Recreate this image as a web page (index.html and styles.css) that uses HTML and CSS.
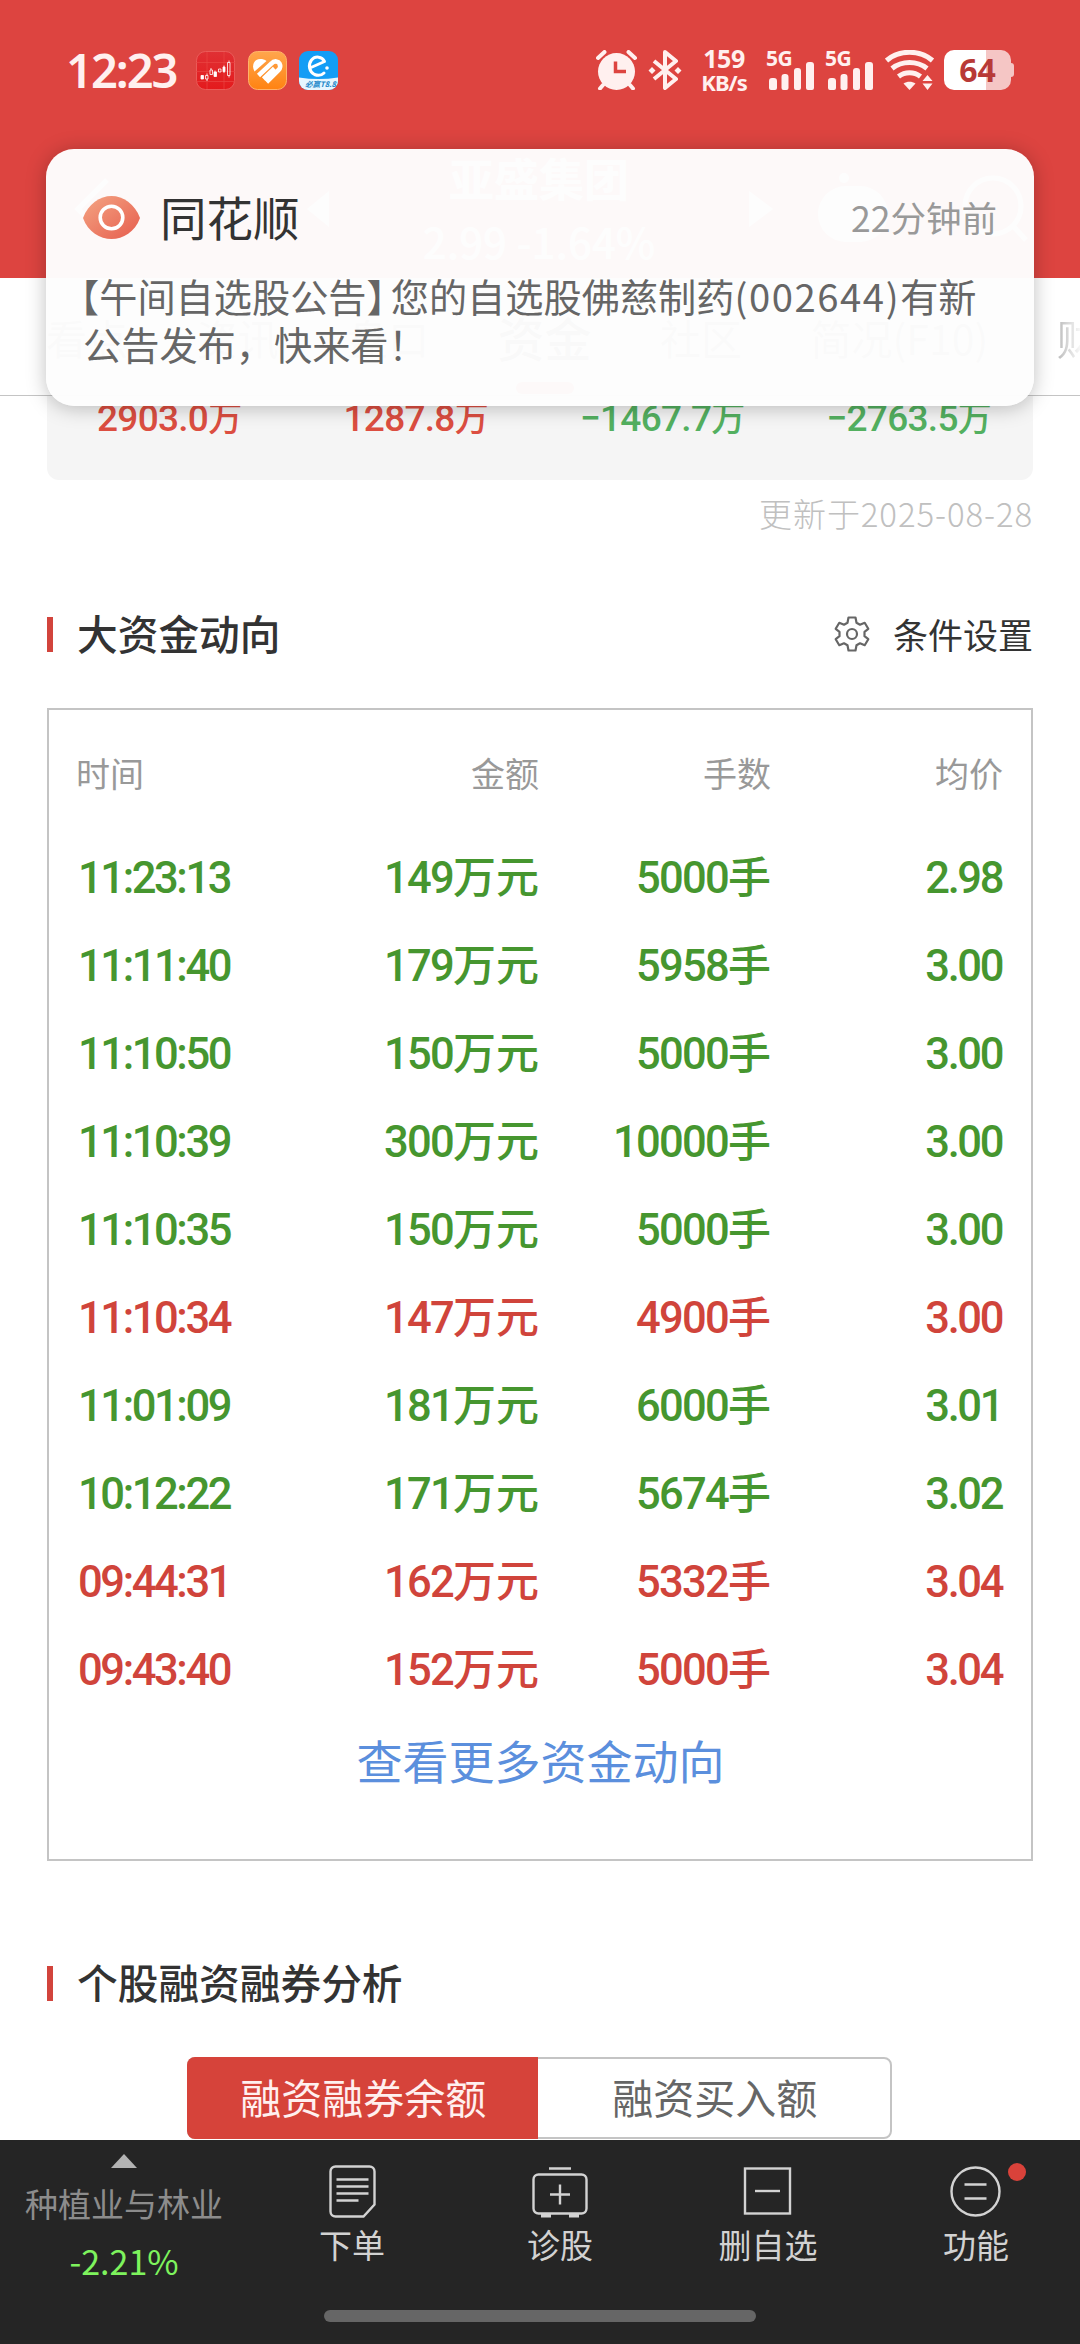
FILE: index.html
```html
<!DOCTYPE html>
<html lang="zh-CN">
<head>
    <meta charset="UTF-8">
    <meta name="viewport" content="width=device-width, initial-scale=1.0">
    <title>亚盛集团 - 资金</title>
    <link rel="stylesheet" href="styles.css">
</head>
<body>

<div class="page">

    <header class="header">
        <!-- 状态栏 -->
        <div class="status-bar">
            <div class="status-left">
                <span class="clock">12:23</span>
                <svg class="app-icon" viewBox="0 0 39 39">
                    <defs>
                        <linearGradient id="gRed" x1="0" y1="0" x2="0" y2="1"><stop offset="0" stop-color="#e03034"/><stop offset="1" stop-color="#e41a1c"/></linearGradient>
                    </defs>
                    <rect x=".5" y=".5" width="38" height="38" rx="9" fill="url(#gRed)" stroke="#ea5a58"/>
                    <path d="M0 20.500H39M11 1V38M28 1V38M0 11.500H39M0 30.500H39" stroke="#ea4644" stroke-width=".7"/>
                    <g fill="#fff" stroke="#fff" stroke-width=".8">
                        <path d="M5 24.500h2.500v3.500H5zM18 21h2.500v4.500H18zM27 16h2v4.500h-2z"/>
                        <path fill="none" d="M9.500 24.500h2.500v3.500H9.500zM14 19h2.500v4.500H14zM22.500 18h2.500v3H22.500zM31.500 11.500h2.500v13H31.500zM6 24v1M11 22.500v2M11 28v2M15 17v2M19 19.500v2M28 14.500v2M28 20v2M33 9.500v2M33 24.500v2"/>
                    </g>
                </svg>
                <svg class="app-icon" viewBox="0 0 39 39">
                    <defs>
                        <linearGradient id="gOrange" x1="0" y1="0" x2="0" y2="1"><stop offset="0" stop-color="#ffa64d"/><stop offset="1" stop-color="#ff8312"/></linearGradient>
                    </defs>
                    <rect x=".5" y=".5" width="38" height="38" rx="9" fill="url(#gOrange)" stroke="#ffb36a"/>
                    <path d="M6.500 20.500C3 14 6.500 8 12 8c3 0 4.500 .5 6.500 2z" fill="#fff"/>
                    <path d="M10.500 24.500 23.500 12.500c3-3.500 7-2 8 0s1 4.500-1 6.500L18.500 31M15.500 28 26.500 17.500" fill="none" stroke="#fff" stroke-width="4.600"/>
                </svg>
                <svg class="app-icon" viewBox="0 0 39 39">
                    <defs>
                        <clipPath id="cBlue"><rect width="39" height="39" rx="9"/></clipPath>
                    </defs>
                    <g clip-path="url(#cBlue)">
                        <rect width="39" height="39" fill="#139df5"/>
                        <path d="M0 26.500q19.500 3 39 0V39H0z" fill="#e6f6ff"/>
                    </g>
                    <path d="M12 16.500 25.500 10.500C23 5.500 16.500 4.500 12.500 9c-4 5-2 12 3 14.500 4 1.500 7 1 9.500-1.500" fill="none" stroke="#fff" stroke-width="3" stroke-linecap="round" stroke-linejoin="round"/>
                    <circle cx="28" cy="17" r="1.800" fill="#fff"/>
                    <text x="6" y="36" class="app-icon-text">必赢T8.8</text>
                </svg>
            </div>
            <div class="status-right">
                <svg class="icon-alarm" width="42" height="40" viewBox="0 0 42 40">
                    <circle cx="20.500" cy="21.500" r="18.500" fill="#fff0ef"/>
                    <path d="M2 8 8.500 2M39 8l-6.500-6M7 35l-3 3.500M34 35l3 3.500" stroke="#fff0ef" stroke-width="4" stroke-linecap="round"/>
                    <path d="M19.500 11.500V21.500H30" fill="none" stroke="#dd4440" stroke-width="3.500"/>
                </svg>
                <svg class="icon-bt" width="34" height="40" viewBox="0 0 34 40">
                    <path d="M6 11 28 29 17 38V2L28 11 6 29" fill="none" stroke="#fff0ef" stroke-width="4" stroke-linejoin="round"/>
                    <path d="M4 17l3.500 3.500L4 24 .5 20.500zM30 17l3.500 3.500L30 24l-3.500-3.500z" fill="#fff0ef"/>
                </svg>
                <div class="net-speed"><span>159</span><span>KB/s</span></div>
                <div class="signal">
                    <span>5G</span>
                    <svg width="46" height="28" viewBox="0 0 46 28"><path fill="#fff0ef" d="M0 19a3 3 0 0 1 3-3h2a3 3 0 0 1 3 3v7a2 2 0 0 1-2 2H2a2 2 0 0 1-2-2zM12.500 15a3 3 0 0 1 3-3h1a3 3 0 0 1 3 3v11a2 2 0 0 1-2 2h-3a2 2 0 0 1-2-2zM25 9a3 3 0 0 1 3-3h1a3 3 0 0 1 3 3v17a2 2 0 0 1-2 2h-3a2 2 0 0 1-2-2zM37 3a3 3 0 0 1 3-3h2a3 3 0 0 1 3 3v23a2 2 0 0 1-2 2h-4a2 2 0 0 1-2-2z"/></svg>
                </div>
                <div class="signal">
                    <span>5G</span>
                    <svg width="46" height="28" viewBox="0 0 46 28"><path fill="#fff0ef" d="M0 19a3 3 0 0 1 3-3h2a3 3 0 0 1 3 3v7a2 2 0 0 1-2 2H2a2 2 0 0 1-2-2zM12.500 15a3 3 0 0 1 3-3h1a3 3 0 0 1 3 3v11a2 2 0 0 1-2 2h-3a2 2 0 0 1-2-2zM25 9a3 3 0 0 1 3-3h1a3 3 0 0 1 3 3v17a2 2 0 0 1-2 2h-3a2 2 0 0 1-2-2zM37 3a3 3 0 0 1 3-3h2a3 3 0 0 1 3 3v23a2 2 0 0 1-2 2h-4a2 2 0 0 1-2-2z"/></svg>
                </div>
                <svg class="icon-wifi" width="50" height="40" viewBox="0 0 50 40">
                    <g fill="none" stroke="#fff0ef" stroke-width="5">
                        <path d="M1.500 10.500C14-.5 35-.5 47.500 10.500"/>
                        <path d="M7 18.500c10-8 25-8 35 0"/>
                        <path d="M13.500 26.500c6.500-5 15.500-5 22 0"/>
                    </g>
                    <path d="M18.500 33.500c3.500-2.500 8.500-2.500 12 0l-6 6.500z" fill="#fff0ef"/>
                    <path d="M42.500 25l5 6h-10zM42.500 40l-5-6.500h10z" fill="#fff0ef"/>
                </svg>
                <div class="battery"><span class="battery-body"><b>64</b></span><span class="battery-tip"></span></div>
            </div>
        </div>

        <!-- 股票标题 -->
        <div class="stock-bar">
            <svg width="36" height="66" viewBox="0 0 36 66"><path d="M33 4 4 33l29 29" fill="none" stroke="#fff" stroke-width="5"/></svg>
            <svg class="prev" width="22" height="36" viewBox="0 0 22 36"><path d="M22 0v36L0 18z" fill="#fff"/></svg>
            <div class="stock-title">
                <div class="stock-name">亚盛集团</div>
                <div class="stock-price">2.99 -1.64%</div>
            </div>
            <svg class="next" width="24" height="36" viewBox="0 0 24 36"><path d="M0 0v36l24-18z" fill="#fff"/></svg>
            <svg class="robot" width="76" height="72" viewBox="0 0 76 72">
                <rect x="3" y="13" width="70" height="56" rx="28" fill="#fff"/>
                <rect x="11" y="21" width="54" height="36" rx="17" fill="#eee"/>
                <rect x="26" y="31" width="6" height="16" rx="3" fill="#fff"/>
                <rect x="45" y="31" width="6" height="16" rx="3" fill="#fff"/>
                <circle cx="29" cy="5" r="5" fill="#fff"/>
            </svg>
            <svg width="66" height="68" viewBox="0 0 66 68"><circle cx="31" cy="31" r="28" fill="none" stroke="#fff" stroke-width="5"/><path d="M51 51l13 14" stroke="#fff" stroke-width="5"/></svg>
        </div>
    </header>

    <nav class="tabs">
        <span>看点</span>
        <span>资讯</span>
        <span>盘口</span>
        <span class="active">资金</span>
        <span>社区</span>
        <span>简况(F10)</span>
        <span class="faded">财务</span>
    </nav>

    <main class="content">
        <div class="flow-card">
            <span class="up">2903.0<i>万</i></span>
            <span class="up">1287.8<i>万</i></span>
            <span class="down">−1467.7<i>万</i></span>
            <span class="down">−2763.5<i>万</i></span>
        </div>
        <div class="update-time">更新于2025-08-28</div>

        <!-- 大资金动向 -->
        <div class="section-head">
            <h2>大资金动向</h2>
            <div class="setting">
                <svg width="36" height="36" viewBox="0 0 36 36" fill="none" stroke="#666" stroke-width="2.200" stroke-linejoin="round">
                    <path d="M14.500 1.500h7l1 5.200 3.500 2 4.700-1.900 3.600 6-3.800 3v4.400l3.800 3-3.600 6-4.700-1.900-3.500 2-1 5.200h-7l-1-5.200-3.500-2-4.700 1.900-3.600-6 3.800-3v-4.400l-3.800-3 3.600-6 4.700 1.900 3.500-2z"/>
                    <circle cx="18" cy="18" r="5"/>
                </svg>
                <span>条件设置</span>
            </div>
        </div>

        <div class="trade-box">
            <div class="row row-head"><span>时间</span><span>金额</span><span>手数</span><span>均价</span></div>
            <div class="row green"><span>11:23:13</span><span>149<i>万元</i></span><span>5000<i>手</i></span><span>2.98</span></div>
            <div class="row green"><span>11:11:40</span><span>179<i>万元</i></span><span>5958<i>手</i></span><span>3.00</span></div>
            <div class="row green"><span>11:10:50</span><span>150<i>万元</i></span><span>5000<i>手</i></span><span>3.00</span></div>
            <div class="row green"><span>11:10:39</span><span>300<i>万元</i></span><span>10000<i>手</i></span><span>3.00</span></div>
            <div class="row green"><span>11:10:35</span><span>150<i>万元</i></span><span>5000<i>手</i></span><span>3.00</span></div>
            <div class="row red"><span>11:10:34</span><span>147<i>万元</i></span><span>4900<i>手</i></span><span>3.00</span></div>
            <div class="row green"><span>11:01:09</span><span>181<i>万元</i></span><span>6000<i>手</i></span><span>3.01</span></div>
            <div class="row green"><span>10:12:22</span><span>171<i>万元</i></span><span>5674<i>手</i></span><span>3.02</span></div>
            <div class="row red"><span>09:44:31</span><span>162<i>万元</i></span><span>5332<i>手</i></span><span>3.04</span></div>
            <div class="row red"><span>09:43:40</span><span>152<i>万元</i></span><span>5000<i>手</i></span><span>3.04</span></div>
            <a class="more">查看更多资金动向</a>
        </div>

        <!-- 融资融券 -->
        <div class="section-head margin-head">
            <h2>个股融资融券分析</h2>
        </div>
        <div class="switch">
            <span class="on">融资融券余额</span>
            <span>融资买入额</span>
        </div>
    </main>

    <!-- 底部导航 -->
    <footer class="bottom">
        <div class="bottom-bar">
            <div class="industry">
                <svg width="26" height="14" viewBox="0 0 26 14"><path d="M13 0l13 14H0z" fill="#b3b3b3"/></svg>
                <span class="industry-name">种植业与林业</span>
                <span class="industry-change">-2.21%</span>
            </div>
            <div class="nav-item">
                <svg width="56" height="54" viewBox="0 0 56 54" fill="none" stroke="#d2d2d2" stroke-width="2.400">
                    <path d="M11.500 2.500h34a5 5 0 0 1 5 5v33l-11 12h-28a5 5 0 0 1-5-5v-40a5 5 0 0 1 5-5z"/>
                    <path d="M12.500 15.500h32M12.500 22.500h32M12.500 29.500h32M12.500 36.500h22"/>
                </svg>
                <span>下单</span>
            </div>
            <div class="nav-item">
                <svg width="56" height="54" viewBox="0 0 56 54" fill="none" stroke="#d2d2d2" stroke-width="2.400">
                    <rect x="1.500" y="10.500" width="53" height="39" rx="5"/>
                    <path d="M17 4.500h22M28 20.500v20M18 30.500h20"/>
                    <path d="M9 51.500h10M37 51.500h10" stroke-width="4"/>
                </svg>
                <span>诊股</span>
            </div>
            <div class="nav-item">
                <svg width="56" height="54" viewBox="0 0 56 54" fill="none" stroke="#d2d2d2" stroke-width="2.400">
                    <rect x="5" y="4.500" width="45" height="45"/>
                    <path d="M15 27h25"/>
                </svg>
                <span>删自选</span>
            </div>
            <div class="nav-item">
                <svg width="56" height="54" viewBox="0 0 56 54" fill="none" stroke="#d2d2d2" stroke-width="2.400">
                    <circle cx="27.500" cy="27.500" r="24"/>
                    <path d="M16.500 20.500h22M16.500 34.500h22"/>
                </svg>
                <i class="dot"></i>
                <span>功能</span>
            </div>
        </div>
        <div class="home-indicator"></div>
    </footer>

    <!-- 通知弹窗 -->
    <div class="notice">
        <div class="notice-head">
            <svg width="57" height="44" viewBox="0 0 57 44">
                <defs>
                    <linearGradient id="gEye" x1="0" y1="0" x2="1" y2="1"><stop offset="0" stop-color="#f4a583"/><stop offset="1" stop-color="#e65d4e"/></linearGradient>
                </defs>
                <path d="M0 22C5 8 17 0 28.500 0S52 8 57 22C52 36 40 43 28.500 43S5 36 0 22z" fill="url(#gEye)"/>
                <circle cx="28.500" cy="21.500" r="11.300" fill="none" stroke="#fff" stroke-width="3.600"/>
            </svg>
            <span class="notice-app">同花顺</span>
            <span class="notice-time">22分钟前</span>
        </div>
        <div class="notice-text"><span class="hang-l">【</span>午间自选股公告<span class="hang-r">】</span>您的自选股佛慈制药<span class="code">(002644)</span>有新<br>公告发布，快来看！</div>
    </div>

</div>

</body>
</html>
```
FILE: styles.css
```css
* {
    box-sizing: border-box;
}

body {
    margin: 0;
    background: #fff;
    font-family: "Noto Sans CJK SC", sans-serif;
    color: #333;
}

i {
    font-style: normal;
}

svg {
    display: block;
    flex: none;
}

.page {
    position: relative;
    width: 1080px;
    height: 2344px;
    display: flex;
    flex-direction: column;
    overflow: hidden;
}

/* 顶部红色区域 */
.header {
    height: 278px;
    flex: none;
    background: #dd4440;
    color: #fff0ef;
}

.status-bar {
    height: 140px;
    padding: 0 66px 0 66px;
    display: flex;
    justify-content: space-between;
    align-items: center;
    font-family: "Noto Sans", sans-serif;
}

.status-left, .status-right {
    display: flex;
    align-items: center;
}

.clock {
    width: 130px;
    font-size: 47px;
    font-weight: 600;
    line-height: 60px;
    letter-spacing: -2px;
}

.app-icon {
    width: 39px;
    height: 39px;
    margin-right: 12.500px;
}

.app-icon-text {
    font-family: "Noto Sans CJK SC", sans-serif;
    font-size: 7.500px;
    font-weight: 700;
    font-style: italic;
    fill: #1b87c9;
}

.icon-bt {
    margin-left: 10px;
}

.net-speed {
    width: 46px;
    margin-left: 19px;
    display: flex;
    flex-direction: column;
    align-items: center;
    font-size: 25px;
    font-weight: 700;
    line-height: 24px;
    letter-spacing: -0.5px;
}

.net-speed span:last-child {
    font-size: 22px;
    letter-spacing: -1px;
}

.signal {
    width: 46px;
    height: 40px;
    margin-left: 22px;
    display: flex;
    flex-direction: column;
    justify-content: flex-end;
    position: relative;
}

.signal + .signal {
    margin-left: 13px;
}

.signal span {
    position: absolute;
    left: -3px;
    top: -3px;
    font-size: 21px;
    font-weight: 700;
    line-height: 22px;
    letter-spacing: -0.5px;
}

.icon-wifi {
    margin-left: 11px;
}

.battery {
    display: flex;
    align-items: center;
    margin-left: 9px;
}

.battery-body {
    width: 67px;
    height: 40px;
    border-radius: 10px;
    background: linear-gradient(90deg, #fff 42px, #f5c6c5 42px);
    color: #b83a37;
    font-size: 32px;
    line-height: 40px;
    text-align: center;
}

.battery-tip {
    width: 3px;
    height: 14px;
    border-radius: 0 3px 3px 0;
    background: #f5c6c5;
}

.stock-bar {
    height: 138px;
    padding: 0 52px 0 74px;
    display: flex;
    align-items: center;
    color: #fff;
}

.stock-title {
    width: 422px;
    text-align: center;
    font-weight: 700;
}

.stock-name {
    font-size: 45px;
    line-height: 64px;
}

.stock-price {
    font-size: 42px;
    line-height: 62px;
    font-weight: 500;
}

.prev {
    margin-left: 197px;
}

.robot {
    margin: 0 71px 0 42px;
}

/* 分类标签 */
.tabs {
    height: 118px;
    flex: none;
    padding: 0 0 0 46px;
    display: flex;
    align-items: center;
    gap: 68.500px;
    border-bottom: 1px solid #c4c4c4;
    font-size: 41px;
    color: #666;
    white-space: nowrap;
    overflow: hidden;
}

.tabs .active {
    position: relative;
    font-size: 47px;
    font-weight: 500;
    color: #333;
}

.tabs .active::after {
    content: "";
    position: absolute;
    left: 18px;
    bottom: -23px;
    width: 58px;
    height: 12px;
    border-radius: 6px;
    background: #dd4440;
}

.tabs .faded {
    background: linear-gradient(90deg, #bbb, #fff 26px);
    background-clip: text;
    color: transparent;
}

/* 内容区 */
.content {
    flex: 1;
    min-height: 0;
    padding: 0 47px;
    overflow: hidden;
    display: flex;
    flex-direction: column;
}

.flow-card {
    height: 84px;
    flex: none;
    display: flex;
    background: #f5f5f5;
    border-radius: 0 0 12px 12px;
    font-family: Roboto, sans-serif;
    font-weight: 500;
    font-size: 37px;
    letter-spacing: -0.7px;
    line-height: 45px;
}

.flow-card span {
    flex: 1;
    padding-right: 2px;
    text-align: center;
    white-space: nowrap;
}

.flow-card i {
    font-family: "Noto Sans CJK SC", sans-serif;
    font-size: 34px;
    line-height: 0;
}

.up {
    color: #dc4e41;
}

.down {
    color: #53b060;
}

.update-time {
    height: 68px;
    line-height: 67px;
    flex: none;
    text-align: right;
    font-size: 33px;
    font-weight: 300;
    letter-spacing: 0.9px;
    color: #c0c0c0;
}

.section-head {
    height: 160px;
    padding-top: 12px;
    flex: none;
    display: flex;
    align-items: center;
    justify-content: space-between;
}

.section-head h2 {
    margin: 0;
    height: 35px;
    padding-left: 24px;
    border-left: 6px solid #d2443c;
    font-size: 40.700px;
    font-weight: 500;
    line-height: 31px;
}

.setting {
    display: flex;
    align-items: center;
    gap: 23px;
    font-size: 35px;
    line-height: 36px;
}

/* 资金表格 */
.trade-box {
    height: 1153px;
    flex: none;
    border: 2px solid #c4c4c4;
    padding: 0 28px 0 29px;
    display: flex;
    flex-direction: column;
}

.row {
    height: 88px;
    display: grid;
    grid-template-columns: 229px 232px 232px 1fr;
    align-items: center;
    font-family: Roboto, sans-serif;
    font-weight: 500;
    font-size: 43.500px;
    letter-spacing: -1.700px;
    line-height: 60px;
}

.row span {
    text-align: right;
    white-space: nowrap;
}

.row span:first-child {
    text-align: left;
    letter-spacing: -2.400px;
}

.row span:last-child {
    letter-spacing: -2.400px;
    padding-right: 1px;
}

.row i {
    font-family: "Noto Sans CJK SC", sans-serif;
    font-size: 43px;
    letter-spacing: 0;
    line-height: 0;
}

.row.row-head {
    height: 125px;
    font-family: "Noto Sans CJK SC", sans-serif;
    font-size: 34px;
    font-weight: 400;
    color: #999;
}

.row.row-head span {
    padding: 0;
    letter-spacing: 0;
}

.row.row-head span:first-child {
    margin-left: -2px;
}

.green {
    color: #46962f;
}

.red {
    color: #d0443b;
}

.more {
    margin-top: -3px;
    text-align: center;
    font-size: 46px;
    line-height: 94px;
    color: #5b8fdd;
}

.margin-head {
    height: 196px;
    padding-top: 48px;
}

.switch {
    width: 705px;
    height: 82px;
    flex: none;
    align-self: center;
    margin-right: 2px;
    display: flex;
    border: 2px solid #c4c4c4;
    border-radius: 8px;
    font-size: 41px;
    line-height: 75px;
    color: #666;
}

.switch span {
    flex: 1;
    padding-left: 2px;
    text-align: center;
}

.switch .on {
    margin: -2px 0 -2px -2px;
    border-radius: 8px 0 0 8px;
    line-height: 79px;
    background: #d6433a;
    color: #fff0ef;
}

/* 底部 */
.bottom {
    height: 204px;
    flex: none;
    background: #252525;
    display: flex;
    flex-direction: column;
    align-items: center;
}

.bottom-bar {
    width: 1080px;
    height: 170px;
    display: flex;
    color: #d2d2d2;
    font-size: 33px;
}

.industry {
    width: 248px;
    padding-top: 14px;
    display: flex;
    flex-direction: column;
    align-items: center;
}

.industry-name {
    margin-top: 11px;
    line-height: 48px;
    color: #8c8c8c;
}

.industry-change {
    margin-top: 9px;
    font-size: 34px;
    line-height: 50px;
    color: #7ef35d;
}

.nav-item {
    position: relative;
    width: 208px;
    padding-top: 24px;
    display: flex;
    flex-direction: column;
    align-items: center;
}

.nav-item span {
    margin-top: 2px;
    line-height: 48px;
}

.dot {
    position: absolute;
    left: 136px;
    top: 23px;
    width: 18px;
    height: 18px;
    border-radius: 50%;
    background: #d9423a;
}

.home-indicator {
    width: 432px;
    height: 12px;
    border-radius: 6px;
    background: #666;
}

/* 通知弹窗,浮在页面上方 */
.notice {
    position: absolute;
    left: 46px;
    top: 149px;
    width: 988px;
    height: 257px;
    padding: 39px 37px 0 37px;
    border-radius: 28px;
    background: rgba(253, 253, 253, 0.98);
    box-shadow: 0 2px 20px rgba(0, 0, 0, 0.25);
}

.notice-head {
    height: 60px;
    display: flex;
    align-items: center;
}

.notice-app {
    margin-left: 20px;
    padding-bottom: 5px;
    font-size: 46.500px;
    line-height: 56px;
}

.notice-time {
    margin-left: auto;
    padding-bottom: 2px;
    font-size: 35.500px;
    line-height: 56px;
    color: #999;
}

.notice-text {
    margin-top: 24px;
    font-size: 38.200px;
    line-height: 48px;
    color: #666;
    white-space: nowrap;
}

.hang-l {
    margin-left: -22px;
}

.hang-r {
    margin-right: -14px;
}

.code {
    letter-spacing: 1.600px;
}
```
